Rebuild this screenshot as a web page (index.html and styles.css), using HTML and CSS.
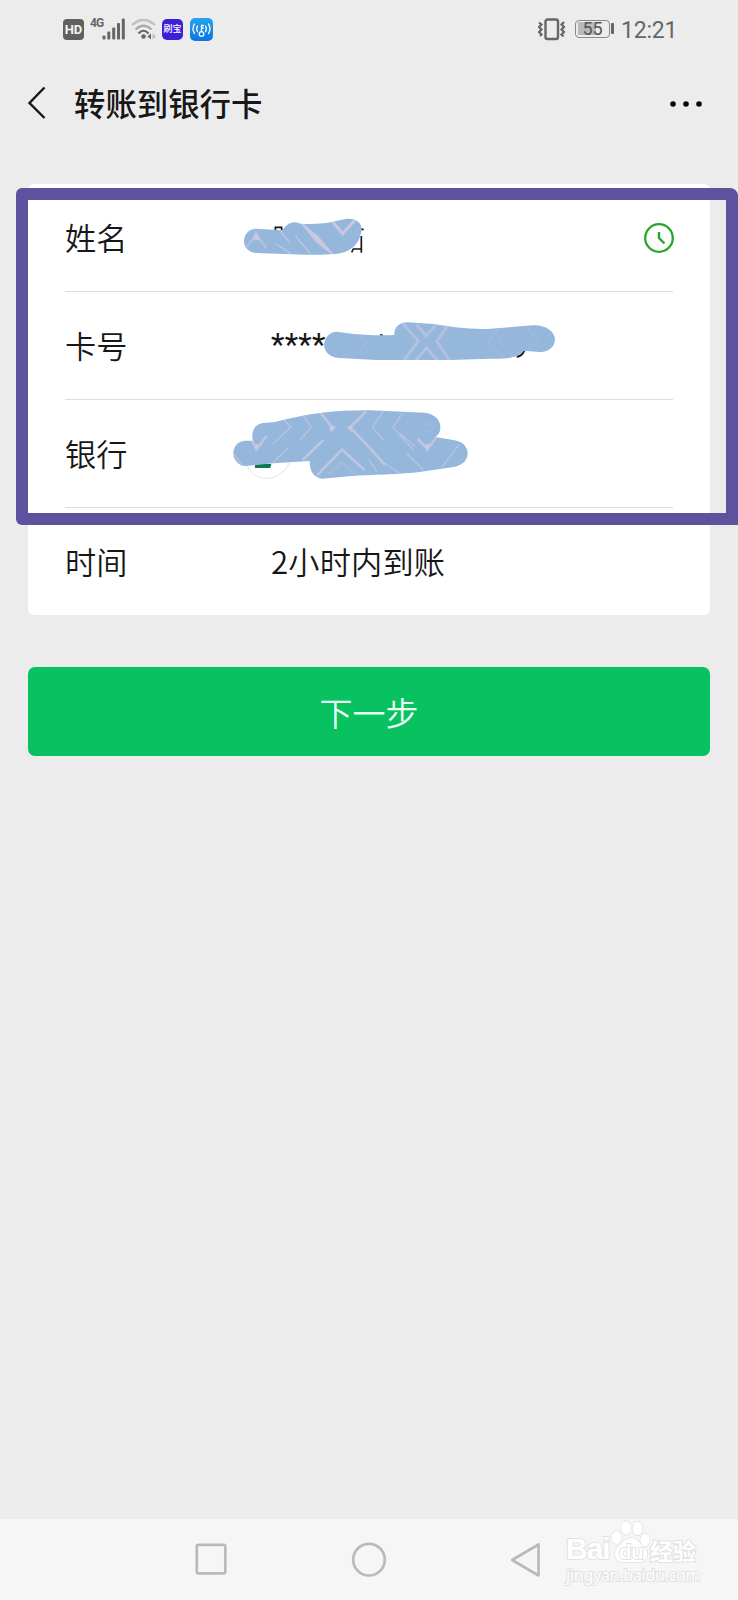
FILE: index.html
```html
<!DOCTYPE html>
<html lang="zh-CN">
<head>
<meta charset="utf-8">
<title>转账到银行卡</title>
<link rel="stylesheet" href="styles.css">
</head>
<body>
<div class="screen">
  <div class="status">
    <div class="status-left">
      <span class="hd">HD</span>
      <span class="net">4G</span>
      <svg class="signal" width="24" height="22" viewBox="0 0 24 22" fill="#666"><rect x="0.5" y="17.5" width="3" height="4" rx="1"/><rect x="5.3" y="13.500" width="3" height="8" rx="1"/><rect x="10.200" y="9.500" width="3" height="12" rx="1"/><rect x="15" y="5" width="3" height="16.500" rx="1"/><rect x="19.800" y="0.500" width="3" height="21" rx="1"/></svg>
      <svg class="wifi" width="26" height="22" viewBox="0 0 26 22" fill="none" stroke-width="2.200"><path d="M1 7Q12.500-3 24 7" stroke="#c0c0c0"/><path d="M4.500 11.500Q12.500 4 20.500 11.500" stroke="#aaa"/><path d="M7.500 15.500Q12.500 10 17.500 15.500" stroke="#666"/><circle cx="12.500" cy="18.500" r="2.300" fill="#666"/><path d="M20 15.500v6l-3.500-3z" fill="#666"/><path d="M21.500 15.500v6l3.500-3z" fill="#bbb"/></svg>
      <span class="app">刷宝</span>
      <svg class="key" width="23" height="23" viewBox="0 0 23 23"><defs><linearGradient id="sky" x2="0" y2="1"><stop stop-color="#24a4ed"/><stop offset="1" stop-color="#0a75df"/></linearGradient></defs><rect width="23" height="23" rx="5" fill="url(#sky)"/><g fill="none" stroke="#fff" stroke-width="1.300" stroke-linecap="round"><circle cx="11.500" cy="16" r="2.300"/><path d="M11.500 13.500V7.500h2M11.500 10h1.700M7.500 8q-1.700 2.800 0 5.600M4.500 6q-3 4.700 0 9.500M15.500 8q1.700 2.800 0 5.600M18.500 6q3 4.700 0 9.500"/></g></svg>
    </div>
    <div class="status-right">
      <svg width="28" height="23" viewBox="0 0 28 23" fill="none" stroke="#666"><rect x="7.500" y="1.500" width="12.500" height="19.500" rx="2" stroke-width="2.400"/><path d="M1 4.500l2.500 2L1 9l2.500 2.500L1 14l2.500 2.500L2 18M26 4l-2.500 2.500L26 9l-2.500 2.500L26 14l-2.500 2.500 2 2" stroke-width="2.200"/></svg>
      <div class="battery"><span>55</span></div>
      <span class="clock">12:21</span>
    </div>
  </div>
  <div class="header">
    <svg class="back" width="20" height="34" viewBox="0 0 20 34" fill="none" stroke="#171717" stroke-width="2.400"><path d="M17.500 1.500L2.500 17l15 15"/></svg>
    <h1>转账到银行卡</h1>
    <svg class="more" width="34" height="8" viewBox="0 0 34 8"><circle cx="4" cy="4" r="2.800"/><circle cx="17" cy="4" r="2.800"/><circle cx="30" cy="4" r="2.800"/></svg>
  </div>
  <div class="card">
    <div class="row"><span class="label">姓名</span>
      <svg class="history" width="32" height="32" viewBox="0 0 32 32" fill="none" stroke="#2aa52c" stroke-width="2.300"><circle cx="16" cy="16" r="13.800"/><path d="M16 10v6l5.500 5.500" stroke-width="2.400"/></svg>
    </div>
    <div class="row"><span class="label">卡号</span><span class="value stars">****</span></div>
    <div class="row"><span class="label">银行</span></div>
    <div class="row"><span class="label">时间</span><span class="value">2小时内到账</span></div>
  </div>
  <button class="next">下一步</button>
  <div class="navbar">
    <svg width="738" height="81" viewBox="0 0 738 81" fill="none" stroke="#bababa" stroke-width="2.700" stroke-linejoin="round"><rect x="196.800" y="25.800" width="28.500" height="28.500" rx="1.500"/><circle cx="369" cy="40.700" r="15.800"/><path d="M538.500 25.500v31L512.200 41z"/></svg>
  </div>

  <div class="frame"></div>
  <svg class="scribbles" width="738" height="540" viewBox="0 0 738 540" fill="none">
    <defs>
      <clipPath id="c1"><path id="s1" d="M72 122C73 101 88 86 108 86L188 91C198 74 211 67 226 67L246 72C285 73 325 71 358 61C382 54 403 54 415 66C428 77 426 92 420 110C409 142 383 157 348 162C278 168 180 161 110 159C89 158 72 145 72 122Z"/></clipPath>
      <clipPath id="c2"><path id="s2" d="M312 435C314 411 330 396 350 395L402 402C447 406 485 407 523 405C522 381 539 367 563 367L640 372C700 381 751 389 812 386L939 376C978 374 1005 396 1005 418C1005 441 984 459 956 456L912 452C894 474 852 478 812 476L690 480L470 480L355 474C330 471 313 456 312 435Z"/></clipPath>
      <clipPath id="c3"><path id="s3" d="M40 218C42 195 56 183 76 182L99 182C91 152 107 132 128 129L165 126C270 98 360 90 450 91L614 98C642 101 663 119 661 144C660 158 654 166 646 171L704 181C728 185 743 201 743 220C742 242 728 255 706 260L604 275C540 283 450 284 395 288L307 296C284 294 268 275 269 243L160 250L78 258C55 257 40 240 40 218Z"/></clipPath>
    </defs>
    <g transform="translate(220 200) scale(.33333)">
      <path d="M166 94V82H185V91M395 157L400 147H424M424 158V108M422 88H431" stroke="#171717" stroke-width="5"/>
      <use href="#s1" fill="#95b7dc"/>
      <g clip-path="url(#c1)" stroke="#b8c3df" stroke-width="5"><path d="M80 140L108 104L140 145M178 90L210 128M166 130L214 162M226 107L270 160"/><path d="M338 65L368 101L405 60" stroke-width="9" stroke="#c9c8df"/><path d="M245 70L295 112L338 163L290 125Z" stroke="#c9c8df" fill="#c9c8df"/><path d="M97 118L108 97L120 118Z" fill="#d5cee0"/></g>
      <path d="M480 406H488M890 470Q905 470 913 452" stroke="#171717" stroke-width="6"/>
      <use href="#s2" fill="#95b7dc"/>
      <g clip-path="url(#c2)" stroke="#a9bcdf"><path d="M417 400L441 426L401 474M335 452L355 474M370 470L399 440M836 388L804 425L848 474M865 390L835 421L880 472M920 380L955 424L920 452" stroke-width="3"/><path d="M548 370L595 424L552 480M684 376L650 424L690 482M590 374L619 407L650 373M588 480L620 444L653 482" stroke-width="9" stroke="#b3c0df"/></g>
    </g>
    <g transform="translate(220 380) scale(.33333)">
      <path d="M82 258C104 309 182 309 208 248" stroke="#dedede" stroke-width="2.500"/><path d="M105 252H154L151 264H105Z" fill="#087b48"/>
      <use href="#s3" fill="#95b7dc"/>
      <g clip-path="url(#c3)" stroke="#b9c3df" stroke-width="4"><path d="M187 114L212 142L158 193M248 105L273 142L240 180M205 202L158 250M490 94L457 142L490 180M549 98L519 142L580 210M539 160L585 199M560 220L610 270M446 236L470 275M480 240L548 285M717 194L665 263M40 220L66 257"/><path d="M112 153L125 138M568 122L552 142L571 164M617 130L606 142L618 154L633 154L639 142L631 130Z" stroke-width="2.500" stroke="#a8bbdb"/><path d="M302 99L337 142M310 180L248 240M438 94L391 142L448 202L495 255M291 286L366 209L434 270M96 182L109 209L140 168M594 177L622 207L650 171" stroke-width="8" stroke="#c0c5df"/><path d="M325 282L367 246L407 286" stroke="#a3badb" stroke-width="9"/><path d="M101 194H117L109 212ZM613 193H632L622 213ZM329 134L346 142L332 155ZM398 134L382 142L396 155Z" fill="#d3cbe0"/></g>
    </g>
  </svg>
  <div class="watermark">
    <div class="wm-top"><span class="bai">Bai</span>
      <span class="paw"><svg width="40" height="44" viewBox="0 0 40 44" fill="#fff" stroke="#e0e0e0" stroke-width="1.300"><ellipse cx="5.500" cy="17.500" rx="4.700" ry="6.500"/><ellipse cx="15" cy="8" rx="4.900" ry="6.800"/><ellipse cx="26.500" cy="8.500" rx="4.900" ry="6.800"/><ellipse cx="34" cy="20" rx="4.700" ry="6.500"/><path d="M20 18C14 18 11 24 7 27C2 31 3 42 12 42H28C38 42 38 32 34 28C29 24 26 18 20 18Z"/></svg><b>du</b></span>
      <span class="jy">经验</span></div>
    <div class="wm-url">jingyan.baidu.com</div>
  </div>
</div>
</body>
</html>
```
FILE: styles.css
```css
* { box-sizing: border-box; }
body { margin: 0; background: #ececec; }
.screen { position: relative; width: 738px; height: 1600px; overflow: hidden; display: flex; flex-direction: column; background: #ececec; color: #171717; font-family: Roboto, "Noto Sans CJK SC", sans-serif; }
.status { height: 58px; flex: none; display: flex; justify-content: space-between; padding: 0 61px 0 63px; color: #666; }
.status-left, .status-right { display: flex; align-items: center; }
.hd { width: 21px; height: 21px; margin-top: 1px; border-radius: 4px; background: #606060; color: #f4f4f4; font: bold 13px/21px Roboto, sans-serif; text-align: center; }
.net { width: 12px; margin: 0 0 12px 6px; font: bold 12px/12px Roboto, sans-serif; letter-spacing: -1px; white-space: nowrap; }
.wifi { margin-left: 5px; }
.app { width: 21px; height: 21px; margin: 1px 0 0 5px; border-radius: 5px; background: #3c20d8; color: #fff; font: 500 9px/20px "Noto Sans CJK SC", sans-serif; text-align: center; }
.key { margin-left: 7px; }
.status-right svg { margin: 0 -1px 0 1px; }
.battery { position: relative; width: 35px; height: 18px; margin: 0 11px 0 10px; border: 1.5px solid #888; border-radius: 4px; background: linear-gradient(90deg, #b9b9b9 18px, transparent 18px) 2px 1px / 29px 13px no-repeat; font-size: 18px; line-height: 16px; text-align: center; color: #555; }
.battery::after { content: ""; position: absolute; right: -5px; top: 2px; width: 3px; height: 11px; border-radius: 1px; background: #666; }
.clock { width: 56px; font-size: 23px; line-height: 28px; margin-top: 3px; letter-spacing: -.2px; white-space: nowrap; }
.header { height: 90px; flex: none; display: flex; align-items: center; padding: 0 35px 0 27px; }
.back { margin-bottom: 1px; }
h1 { margin: 0 0 0 27px; font-family: "Noto Sans CJK SC", sans-serif; font-size: 31.4px; line-height: 46px; font-weight: 500; }
.more { margin-left: auto; margin-top: 2px; fill: #090909; }
.card { width: 682px; height: 431px; flex: none; margin: 36px 28px 0; padding: 0 37px; border-radius: 6px; background: #fff; }
.row { height: 108px; display: flex; align-items: center; border-bottom: 1px solid #dedede; }
.row:last-child { height: 107px; border: 0; }
.label, .value { margin-top: -2px; font-family: "Noto Sans CJK SC", sans-serif; font-size: 31.2px; line-height: 46px; font-weight: 350; }
.label { width: 206px; }
.value { letter-spacing: .2px; }
.stars { font-family: Roboto, sans-serif; font-weight: 400; letter-spacing: .2px; }
.history { margin: 0 -2px 0 auto; }
.next { width: 682px; height: 89px; flex: none; margin: 52px 28px 0; border: 0; border-radius: 7px; padding: 0; background: #08c160; color: #e9fff2; font: 350 33px/48px "Noto Sans CJK SC", sans-serif; }
.navbar { height: 81px; margin-top: auto; background: #f6f6f6; }
.navbar svg { display: block; }
.frame { position: absolute; left: 15.5px; top: 188px; width: 722.5px; height: 336.5px; border: 12px solid #5e529f; border-radius: 6px; border-top-right-radius: 8px; border-bottom-right-radius: 0; }
.scribbles { position: absolute; left: 0; top: 0; }
.watermark { position: absolute; left: 566px; top: 1519px; width: 136px; color: #fff; -webkit-text-stroke: 2px #e2e2e2; paint-order: stroke fill; }
.wm-top { height: 46px; display: flex; align-items: flex-end; }
.bai { width: 45px; font: bold 30px/32px "Liberation Sans", sans-serif; letter-spacing: -1px; }
.paw { position: relative; width: 39px; height: 45px; }
.paw b { position: absolute; left: 8px; top: 21px; font: bold 20px/22px "Liberation Sans", sans-serif; }
.jy { font: bold 23px/30px "Noto Sans CJK SC", sans-serif; }
.wm-url { font: 16px/20px "Noto Sans", sans-serif; letter-spacing: -.25px; white-space: nowrap; }
```
